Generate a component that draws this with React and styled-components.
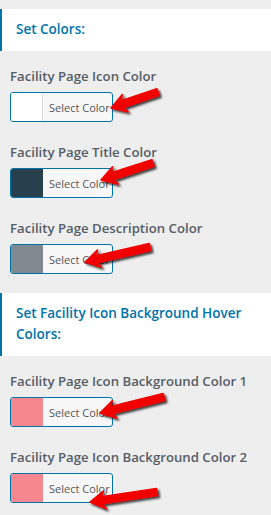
import styled, { createGlobalStyle } from "styled-components";

const GlobalStyle = createGlobalStyle`
  body {
    margin: 0;
    background: #eeeeee;
    font-family: "Open Sans", "Noto Sans", sans-serif;
  }
`;

const Page = styled.div`
  position: relative;
  width: 271px;
  height: 515px;
  overflow: hidden;
  padding-top: 9px;
  box-sizing: border-box;
`;

const SectionHeader = styled.div`
  background: #fff;
  border-left: 2px solid #0073aa;
  padding: 10px 16px 11px 14px;
  color: #0073aa;
  font-size: 13.5px;
  font-weight: 600;
  line-height: 21px;
  margin-top: ${(p) => (p.$first ? "0" : "19px")};
  margin-bottom: 15px;
`;

const FieldList = styled.div`
  display: flex;
  flex-direction: column;
  gap: 20px;
  padding-left: 10px;
`;

const Field = styled.div`
  display: flex;
  flex-direction: column;
  align-items: flex-start;
  gap: 6px;
`;

const Label = styled.div`
  color: #555d66;
  font-size: 13.2px;
  font-weight: 600;
  line-height: 20px;
`;

const ColorButton = styled.button`
  display: flex;
  align-items: stretch;
  width: 103px;
  height: 30px;
  padding: 0;
  border: 1px solid #0073aa;
  border-radius: 3px;
  background: #f7f7f7;
  overflow: hidden;
  font-family: inherit;
  cursor: pointer;
`;

const Swatch = styled.span`
  width: 31px;
  background: ${(p) => p.$color};
  border-right: 1px solid ${(p) => (p.$color === "#ffffff" ? "#ddd" : p.$color)};
`;

const ButtonText = styled.span`
  flex: 1;
  display: flex;
  align-items: center;
  padding-left: 6px;
  color: #555;
  font-size: 11px;
`;

const Overlay = styled.svg`
  position: absolute;
  left: 0;
  top: 0;
  pointer-events: none;
`;

const arrows = [
  { tip: [111, 108], tail: [158, 92] },
  { tip: [101, 180], tail: [153, 163] },
  { tip: [85, 262], tail: [150, 247] },
  { tip: [100, 413], tail: [164, 397] },
  { tip: [90, 502], tail: [157, 492] },
];

const arrowPoints = ({ tip, tail }) => {
  const [tx, ty] = tip;
  const [sx, sy] = tail;
  const len = Math.hypot(sx - tx, sy - ty);
  const dx = (sx - tx) / len;
  const dy = (sy - ty) / len;
  const nx = -dy;
  const ny = dx;
  const head = 15;
  const neck = 12;
  const wing = 9;
  const shaft = 3.6;
  const pt = (along, side) =>
    `${(tx + dx * along + nx * side).toFixed(1)},${(ty + dy * along + ny * side).toFixed(1)}`;
  return [
    pt(0, 0),
    pt(head, wing),
    pt(neck, shaft),
    pt(len, shaft),
    pt(len, -shaft),
    pt(neck, -shaft),
    pt(head, -wing),
  ].join(" ");
};

const fields = [
  { section: "Set Colors:", label: "Facility Page Icon Color", color: "#ffffff" },
  { label: "Facility Page Title Color", color: "#283f4e" },
  { label: "Facility Page Description Color", color: "#7f898f" },
  {
    section: "Set Facility Icon Background Hover Colors:",
    label: "Facility Page Icon Background Color 1",
    color: "#f7878f",
  },
  { label: "Facility Page Icon Background Color 2", color: "#f7878f" },
];

const groups = fields.reduce((acc, f) => {
  if (f.section) acc.push({ title: f.section, items: [] });
  acc[acc.length - 1].items.push(f);
  return acc;
}, []);

const App = () => {
  return (
    <>
      <GlobalStyle />
      <Page>
        {groups.map((g, i) => (
          <div key={g.title}>
            <SectionHeader $first={i === 0}>{g.title}</SectionHeader>
            <FieldList>
              {g.items.map((f) => (
                <Field key={f.label}>
                  <Label>{f.label}</Label>
                  <ColorButton type="button">
                    <Swatch $color={f.color} />
                    <ButtonText>Select Color</ButtonText>
                  </ColorButton>
                </Field>
              ))}
            </FieldList>
          </div>
        ))}

        <Overlay width="271" height="515">
          <defs>
            <filter id="arrowShadow" x="-20%" y="-50%" width="140%" height="200%">
              <feDropShadow dx="2" dy="2" stdDeviation="1.2" floodColor="#000" floodOpacity="0.75" />
            </filter>
          </defs>
          {arrows.map((a, i) => (
            <polygon
              key={i}
              points={arrowPoints(a)}
              fill="#f20000"
              stroke="#f20000"
              strokeWidth="1.5"
              strokeLinejoin="round"
              filter="url(#arrowShadow)"
            />
          ))}
        </Overlay>
      </Page>
    </>
  );
};

export default App;
